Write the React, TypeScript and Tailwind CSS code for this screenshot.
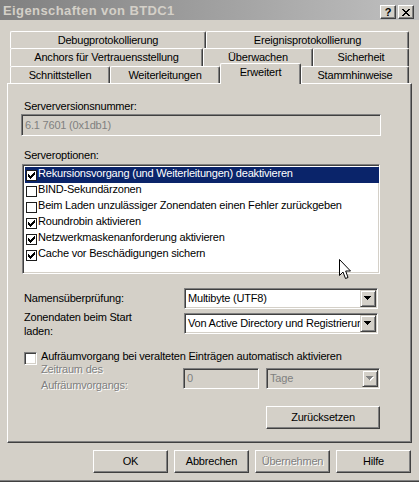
import React from "react";

const RAISED =
  "border border-t-white border-l-white border-r-[#404040] border-b-[#404040] shadow-[inset_-1px_-1px_0_#808080]";
const SUNKEN =
  "border border-t-[#808080] border-l-[#808080] border-r-white border-b-white shadow-[inset_1px_1px_0_#404040,inset_-1px_-1px_0_#d4d0c8]";
const SCROLLBTN =
  "border border-t-[#d4d0c8] border-l-[#d4d0c8] border-r-[#404040] border-b-[#404040] shadow-[inset_1px_1px_0_#ffffff,inset_-1px_-1px_0_#808080]";
const EMBOSS = "text-[#808080] [text-shadow:1px_1px_0_#ffffff]";

function Tab({ label, className }: { label: string; className: string }) {
  return (
    <div
      className={`flex justify-center shrink-0 rounded-t-[2px] border-t border-l border-r border-t-white border-l-white border-r-[#404040] shadow-[inset_-1px_0_0_#808080] bg-[#d4d0c8] ${className}`}
    >
      <span className="leading-[13px] whitespace-nowrap">{label}</span>
    </div>
  );
}

function Arrow({ disabled }: { disabled?: boolean }) {
  return (
    <svg width="8" height="5" viewBox="0 0 8 5" shapeRendering="crispEdges">
      {disabled && <path d="M1 1h7v1H1zM2 2h5v1H2zM3 3h3v1H3zM4 4h1v1H4z" fill="#ffffff" />}
      <path
        d="M0 0h7v1H0zM1 1h5v1H1zM2 2h3v1H2zM3 3h1v1H3z"
        fill={disabled ? "#808080" : "#000000"}
      />
    </svg>
  );
}

function Combo({
  text,
  className,
  disabled,
}: {
  text: string;
  className: string;
  disabled?: boolean;
}) {
  return (
    <div
      className={`${SUNKEN} h-[21px] shrink-0 flex items-center ${
        disabled ? "bg-[#d4d0c8]" : "bg-white"
      } ${className}`}
    >
      <span
        className={`flex-1 min-w-0 overflow-hidden whitespace-nowrap pl-[3px] leading-[13px] ${
          disabled ? "text-[#808080]" : ""
        }`}
      >
        {text}
      </span>
      <div
        className={`${SCROLLBTN} w-[16px] h-[17px] mr-[1px] shrink-0 flex items-center justify-center bg-[#d4d0c8]`}
      >
        <Arrow disabled={disabled} />
      </div>
    </div>
  );
}

function Check() {
  return (
    <svg width="9" height="9" viewBox="0 0 9 9" shapeRendering="crispEdges">
      <path
        d="M7 1h1v1H7zM6 2h2v1H6zM1 3h1v1H1zM5 3h3v1H5zM1 4h2v1H1zM4 4h3v1H4zM1 5h5v1H1zM2 6h3v1H2zM3 7h1v1H3z"
        fill="#000000"
      />
    </svg>
  );
}

function Item({
  label,
  checked,
  selected,
}: {
  label: string;
  checked?: boolean;
  selected?: boolean;
}) {
  return (
    <div
      className={`h-[16px] flex items-start ${
        selected ? "bg-[#0a246a] text-white" : ""
      }`}
    >
      <div className="mt-[3px] ml-[1px] w-[11px] h-[11px] shrink-0 border border-[#1c1c1c] bg-white flex items-center justify-center">
        {checked && <Check />}
      </div>
      <span className="ml-[1px] leading-[13px] whitespace-nowrap">{label}</span>
    </div>
  );
}

function Button({
  label,
  className,
  disabled,
}: {
  label: string;
  className: string;
  disabled?: boolean;
}) {
  return (
    <div
      className={`${RAISED} h-[23px] shrink-0 flex items-center justify-center bg-[#d4d0c8] ${className}`}
    >
      <span className={`leading-[13px] ${disabled ? EMBOSS : ""}`}>{label}</span>
    </div>
  );
}

export default function App() {
  return (
    <div className="relative w-[419px] h-[482px] overflow-hidden bg-[#d4d0c8] text-black text-[11px] tracking-[-0.2px] font-['Liberation_Sans',Arial,sans-serif] flex flex-col">
      {/* Title bar */}
      <div className="h-[20px] shrink-0 flex items-start bg-gradient-to-r from-[#808080] to-[#c0c0c0]">
        <span className="ml-[3px] mt-[4px] text-[13px] leading-[13px] font-bold tracking-[0.4px] text-[#d4d0c8] whitespace-nowrap">
          Eigenschaften von BTDC1
        </span>
        <div className="ml-auto mt-[5px] mr-[5px] flex gap-[2px]">
          <div
            className={`${RAISED} w-[16px] h-[14px] bg-[#d4d0c8] flex items-center justify-center`}
          >
            <span className="font-bold text-[11px] leading-[11px] tracking-normal text-black">
              ?
            </span>
          </div>
          <div
            className={`${RAISED} w-[16px] h-[14px] bg-[#d4d0c8] flex items-center justify-center`}
          >
            <svg width="8" height="7" viewBox="0 0 8 7" shapeRendering="crispEdges">
              <path
                d="M0 0h2v1H0zM6 0h2v1H6zM1 1h2v1H1zM5 1h2v1H5zM2 2h4v1H2zM3 3h2v1H3zM2 4h4v1H2zM1 5h2v1H1zM5 5h2v1H5zM0 6h2v1H0zM6 6h2v1H6z"
                fill="#000000"
              />
            </svg>
          </div>
        </div>
      </div>

      {/* Tab rows */}
      <div className="mt-[11px] ml-[10px] flex shrink-0">
        <Tab label="Debugprotokollierung" className="w-[196px] h-[17px] pt-[2px]" />
        <Tab label="Ereignisprotokollierung" className="w-[203px] h-[17px] pt-[2px]" />
      </div>
      <div className="ml-[10px] flex shrink-0">
        <Tab label="Anchors für Vertrauensstellung" className="w-[193px] h-[18px] pt-[2px]" />
        <Tab label="Überwachen" className="w-[110px] h-[18px] pt-[2px]" />
        <Tab label="Sicherheit" className="w-[96px] h-[18px] pt-[2px]" />
      </div>
      <div className="ml-[10px] flex items-end h-[17px] shrink-0">
        <Tab label="Schnittstellen" className="w-[100px] h-[17px] pt-[2px]" />
        <Tab label="Weiterleitungen" className="w-[110px] h-[17px] pt-[2px]" />
        <Tab
          label="Erweitert"
          className="w-[81px] h-[21px] mb-[-1px] pt-[2px] relative z-10"
        />
        <Tab label="Stammhinweise" className="w-[108px] h-[17px] pt-[2px]" />
      </div>

      {/* Panel */}
      <div className="ml-[7px] w-[405px] h-[360px] shrink-0 border border-t-white border-l-white border-r-[#404040] border-b-[#404040] shadow-[inset_-1px_-1px_0_#808080] flex flex-col">
        <div className="mt-[16px] ml-[16px] leading-[13px]">Serverversionsnummer:</div>
        <div
          className={`${SUNKEN} mt-[1px] ml-[13px] w-[360px] h-[22px] shrink-0 bg-[#d4d0c8] pl-[3px] pt-[2px]`}
        >
          <span className="leading-[13px] text-[#808080]">6.1 7601 (0x1db1)</span>
        </div>

        <div className="mt-[13px] ml-[16px] leading-[13px]">Serveroptionen:</div>
        <div
          className={`${SUNKEN} mt-[2px] ml-[14px] w-[358px] h-[110px] shrink-0 bg-white pl-[2px] pt-[2px] flex flex-col`}
        >
          <Item label="Rekursionsvorgang (und Weiterleitungen) deaktivieren" checked selected />
          <Item label="BIND-Sekundärzonen" />
          <Item label="Beim Laden unzulässiger Zonendaten einen Fehler zurückgeben" />
          <Item label="Roundrobin aktivieren" checked />
          <Item label="Netzwerkmaskenanforderung aktivieren" checked />
          <Item label="Cache vor Beschädigungen sichern" checked />
        </div>

        <div className="mt-[14px] ml-[16px] flex items-center h-[21px] shrink-0">
          <span className="w-[160px] leading-[13px]">Namensüberprüfung:</span>
          <Combo text="Multibyte (UTF8)" className="w-[194px]" />
        </div>
        <div className="ml-[16px] flex items-center shrink-0">
          <span className="w-[160px] leading-[14px] pt-[1px]">
            Zonendaten beim Start
            <br />
            laden:
          </span>
          <Combo text="Von Active Directory und Registrierung" className="w-[194px]" />
        </div>

        <div className="mt-[14px] ml-[16px] flex items-start h-[13px] shrink-0">
          <div className={`${SUNKEN} w-[13px] h-[13px] shrink-0 bg-white`} />
          <span className="ml-[4px] mt-[-2px] leading-[13px] whitespace-nowrap">
            Aufräumvorgang bei veralteten Einträgen automatisch aktivieren
          </span>
        </div>

        <div className="mt-[-4px] ml-[33px] flex items-start shrink-0">
          <span className={`w-[142px] leading-[16px] ${EMBOSS}`}>
            Zeitraum des
            <br />
            Aufräumvorgangs:
          </span>
          <div
            className={`${SUNKEN} mt-[7px] w-[76px] h-[21px] shrink-0 bg-[#d4d0c8] pl-[3px] flex items-center`}
          >
            <span className="leading-[13px] text-[#808080]">0</span>
          </div>
          <Combo text="Tage" className="mt-[7px] ml-[7px] w-[114px]" disabled />
        </div>

        <div className="mt-[13px] ml-[258px]">
          <Button label="Zurücksetzen" className="w-[114px]" />
        </div>
      </div>

      {/* Dialog buttons */}
      <div className="mt-[7px] ml-[93px] flex gap-[6px] shrink-0">
        <Button label="OK" className="w-[75px]" />
        <Button label="Abbrechen" className="w-[75px]" />
        <Button label="Übernehmen" className="w-[75px]" disabled />
        <Button label="Hilfe" className="w-[75px]" />
      </div>

      <div className="mt-auto shrink-0">
        <div className="h-px bg-[#808080]" />
        <div className="h-px bg-[#404040]" />
      </div>

      {/* Mouse cursor */}
      <svg
        className="absolute left-[339px] top-[259px]"
        width="13"
        height="21"
        viewBox="0 0 13 21"
      >
        <path
          d="M0.5 0.5 V16.5 L4 13 L6.5 19.5 L9 18.5 L6.7 12 H11.5 Z"
          fill="#ffffff"
          stroke="#000000"
          strokeWidth="1"
          strokeLinejoin="miter"
        />
      </svg>
    </div>
  );
}
